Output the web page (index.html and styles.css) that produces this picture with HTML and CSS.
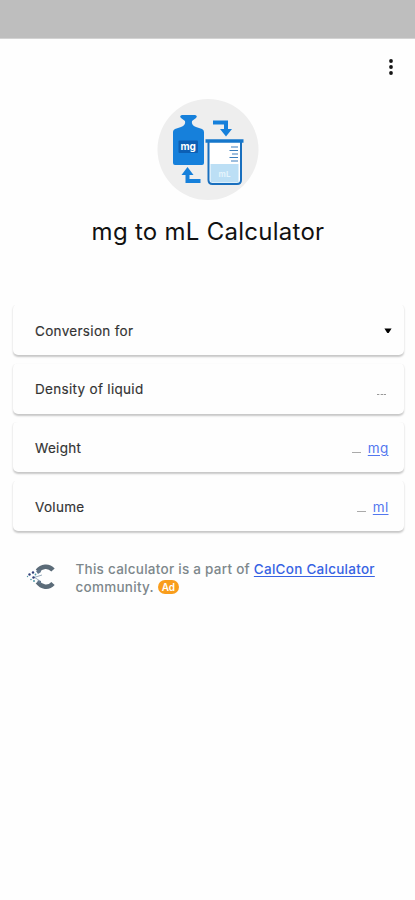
FILE: index.html
```html
<!DOCTYPE html>
<html lang="en">
<head>
<meta charset="utf-8">
<title>mg to mL Calculator</title>
<link rel="stylesheet" href="styles.css">
</head>
<body>
<div class="status-bar"></div>
<header class="toolbar">
  <svg class="more" width="6" height="18" viewBox="0 0 6 18"><circle cx="3" cy="3" r="1.900"/><circle cx="3" cy="9" r="1.900"/><circle cx="3" cy="15" r="1.900"/></svg>
</header>
<main>
  <section class="hero">
    <svg class="logo" width="102" height="102" viewBox="157 98 102 102">
      <circle cx="208" cy="149.500" r="50.500" fill="#eee"/>
      <path d="M182 115h13q3 1 1 3l-4 3q-1 4 4 6l6 2q2 1 2 3v31q0 2-2 2h-27q-2 0-2-2v-31q0-2 2-3l6-2q5-2 4-6l-4-3q-2-2 1-3z" fill="#1680db"/>
      <rect x="178.500" y="140.500" width="19.500" height="12.500" rx="1" fill="#0c5fb4"/>
      <text x="188.200" y="150" class="flask-mg">mg</text>
      <path d="M213 122.500h13v8" fill="none" stroke="#1680db" stroke-width="4"/>
      <path d="M220 129h12l-6 7.500z" fill="#1680db"/>
      <path d="M200.500 181h-13v-7" fill="none" stroke="#1680db" stroke-width="4"/>
      <path d="M181.500 175h12l-6-8z" fill="#1680db"/>
      <path d="M206 140.500h37l-2.500 4v36q0 3.500-3.500 3.500h-25q-3.500 0-3.500-3.500v-36z" fill="#fff"/>
      <rect x="210.500" y="164" width="28" height="18.500" fill="#bcdff5"/>
      <path d="M208.500 142v38q0 4 4 4h24.500q4 0 4-4v-38" fill="none" stroke="#196fbe" stroke-width="2"/>
      <path d="M205.500 141h38" stroke="#1677cb" stroke-width="3.500"/>
      <path d="M231 147h7M229.500 150.500h8.500M232 154h6M229.500 157.500h8.500M231 161h7" stroke="#3c7fbd" stroke-width="1.100"/>
      <text x="224.500" y="176.500" class="flask-ml">mL</text>
    </svg>
    <h1>mg to mL Calculator</h1>
  </section>
  <section class="fields">
    <div class="card"><span class="label">Conversion for</span><svg class="caret" width="8" height="6" viewBox="0 0 8 6"><path d="M.4 .5h7.200L4.700 5H3.300z"/></svg></div>
    <div class="card"><span class="label">Density of liquid</span><span class="value"><i class="blank dots"></i></span></div>
    <div class="card"><span class="label">Weight</span><span class="value"><i class="blank"></i><a class="unit">mg</a></span></div>
    <div class="card"><span class="label">Volume</span><span class="value"><i class="blank"></i><a class="unit">ml</a></span></div>
  </section>
  <footer>
    <svg class="brand" width="30" height="26" viewBox="26 564 30 26">
      <path d="M53 570C48.500 565 41.500 566 37.500 571M53 583.500C48.500 588.500 41.500 587.500 37.500 582" fill="none" stroke="#5b6b78" stroke-width="4.500"/>
      <path d="M36 571l4-2 1 3-3 2zM38 580l3 1 0 3-4-1z" fill="#60758a"/>
      <path d="M34 577.500l8-2.500M34 577l6 4" stroke="#9aaebe" stroke-width="1"/>
      <g fill="#31417a"><circle cx="29.500" cy="574.500" r="1.200"/><circle cx="33" cy="572.500" r="1.200"/><circle cx="33.500" cy="577.500" r="1.200"/></g>
      <g fill="#559aa8"><circle cx="27.500" cy="576.500" r=".7"/><circle cx="31" cy="579.500" r=".8"/><circle cx="35.500" cy="574.500" r=".9"/><circle cx="34" cy="581" r="1"/></g>
    </svg>
    <p><span class="line">This calculator is a part of <a>CalCon Calculator</a></span><span class="line second">community. <b class="ad">Ad</b></span></p>
  </footer>
</main>
</body>
</html>
```

FILE: styles.css
```css
* { box-sizing: border-box; }
body { margin: 0; height: 900px; background: #fefefe; color: #111; font-family: Inter, "Liberation Sans", sans-serif; overflow: hidden; }
.status-bar { height: 39px; background: #bebebe; border-bottom: 1px solid #d3d3d3; }
.toolbar { height: 59px; display: flex; justify-content: flex-end; padding: 19px 21px 0 0; }
.more { fill: #151515; }
.hero { height: 206px; display: flex; flex-direction: column; align-items: center; }
.logo { display: block; }
.flask-mg { font: 700 10px Inter, sans-serif; fill: #fff; text-anchor: middle; }
.flask-ml { font: 700 8px Inter, sans-serif; fill: #e4f4fc; text-anchor: middle; }
h1 { margin: 17px 0 0 1px; font-size: 24px; line-height: 30px; font-weight: 400; letter-spacing: .27px; white-space: nowrap; }
.fields { padding: 0 11.500px 0 12.500px; display: grid; gap: 7.700px; }
.card { height: 51px; border-radius: 5px; background: #fefefe; box-shadow: 0 1.500px 2px rgba(0,0,0,.22); clip-path: inset(1px -3px -5px -3px); display: flex; align-items: center; justify-content: space-between; padding: 2px 15px 0 22.500px; }
.label { font-size: 13.500px; line-height: 20px; color: #333; letter-spacing: .31px; -webkit-text-stroke: .15px #333; }
.caret { margin: 0 -3.500px 0 0; }
.value { display: flex; align-items: center; gap: 7px; }
.blank { width: 9px; height: 1px; background: #aaa; margin-top: 10px; }
.dots { margin-right: 3px; background: repeating-linear-gradient(90deg, #999 0 2px, #ddd 2px 3.500px); }
.unit { color: #5377ef; font-size: 13.500px; line-height: 20px; letter-spacing: .3px; text-decoration: underline; text-underline-offset: 2px; }
footer { padding: 30px 0 0 26px; display: flex; align-items: flex-start; gap: 19.500px; }
.brand { margin-top: 3px; }
p { margin: 0; font-size: 13.500px; line-height: 17.500px; font-weight: 500; color: #7d878b; letter-spacing: .26px; }
.line { display: block; white-space: nowrap; }
p a { color: #3763e3; text-decoration: underline; text-underline-offset: 2px; }
.second { display: flex; align-items: center; gap: 4px; }
.ad { width: 21px; height: 14px; border-radius: 7px; background: #f99d1c; color: #fff; font-size: 10px; line-height: 14px; font-weight: 600; text-align: center; letter-spacing: 0; }
```
